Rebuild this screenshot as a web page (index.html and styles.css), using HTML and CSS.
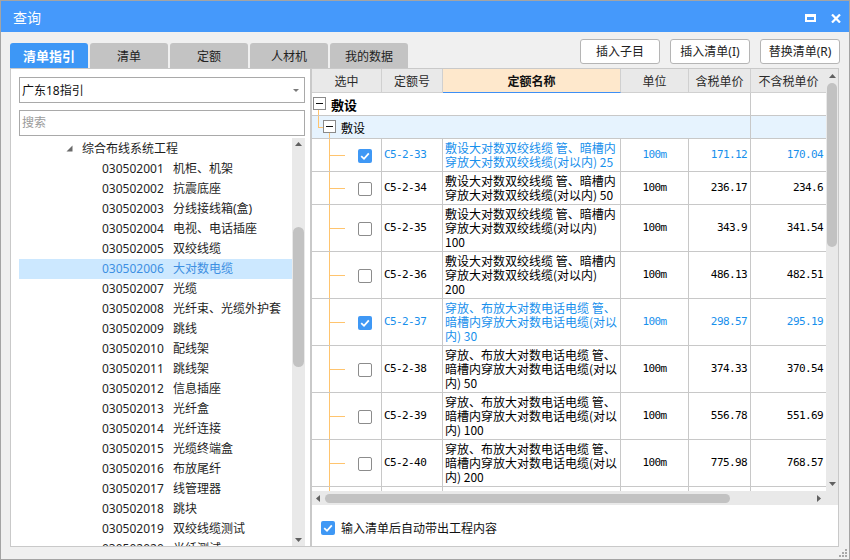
FILE: index.html
```html
<!DOCTYPE html>
<html lang="zh-CN">
<head>
<meta charset="utf-8">
<title>查询</title>
<link rel="stylesheet" href="styles.css">
</head>
<body>
<div class="window">
  <header class="titlebar">
    <span class="title">查询</span>
    <div class="win-ctrls">
      <svg class="ic-max" width="11" height="8" viewBox="0 0 11 8"><path d="M0 0h11v8H0z M2 3h7v3H2z" fill="#fff" fill-rule="evenodd"/></svg>
      <svg class="ic-close" width="10" height="9" viewBox="0 0 10 9"><path d="M1 0.5L9 8.5M9 0.5L1 8.5" stroke="#fff" stroke-width="2.2"/></svg>
    </div>
  </header>

  <div class="toolbar">
    <nav class="tabs">
      <span class="tab active">清单指引</span>
      <span class="tab">清单</span>
      <span class="tab">定额</span>
      <span class="tab">人材机</span>
      <span class="tab">我的数据</span>
    </nav>
    <div class="actions">
      <button class="btn">插入子目</button>
      <button class="btn">插入清单(I)</button>
      <button class="btn">替换清单(R)</button>
    </div>
  </div>

  <div class="panels">
    <section class="left-panel">
      <div class="select">
        <span>广东18指引</span>
        <svg width="6" height="3" viewBox="0 0 6 3"><path d="M0 0h6L3 3z" fill="#7a7a7a"/></svg>
      </div>
      <div class="search">搜索</div>
      <div class="tree-area">
        <ul class="tree">
          <li class="root"><svg class="tri" width="7" height="7" viewBox="0 0 7 7"><path d="M6.5 0.5V6.5H0.5z" fill="#6a6a6a"/></svg><span>综合布线系统工程</span></li>
          <li class="leaf"><span class="code">030502001</span><span>机柜、机架</span></li>
          <li class="leaf"><span class="code">030502002</span><span>抗震底座</span></li>
          <li class="leaf"><span class="code">030502003</span><span>分线接线箱(盒)</span></li>
          <li class="leaf"><span class="code">030502004</span><span>电视、电话插座</span></li>
          <li class="leaf"><span class="code">030502005</span><span>双绞线缆</span></li>
          <li class="leaf on"><span class="code">030502006</span><span>大对数电缆</span></li>
          <li class="leaf"><span class="code">030502007</span><span>光缆</span></li>
          <li class="leaf"><span class="code">030502008</span><span>光纤束、光缆外护套</span></li>
          <li class="leaf"><span class="code">030502009</span><span>跳线</span></li>
          <li class="leaf"><span class="code">030502010</span><span>配线架</span></li>
          <li class="leaf"><span class="code">030502011</span><span>跳线架</span></li>
          <li class="leaf"><span class="code">030502012</span><span>信息插座</span></li>
          <li class="leaf"><span class="code">030502013</span><span>光纤盒</span></li>
          <li class="leaf"><span class="code">030502014</span><span>光纤连接</span></li>
          <li class="leaf"><span class="code">030502015</span><span>光缆终端盒</span></li>
          <li class="leaf"><span class="code">030502016</span><span>布放尾纤</span></li>
          <li class="leaf"><span class="code">030502017</span><span>线管理器</span></li>
          <li class="leaf"><span class="code">030502018</span><span>跳块</span></li>
          <li class="leaf"><span class="code">030502019</span><span>双绞线缆测试</span></li>
          <li class="leaf"><span class="code">030502020</span><span>光纤测试</span></li>
        </ul>
        <div class="vscroll tree-scroll">
          <span class="arrow up"><svg width="7" height="4" viewBox="0 0 7 4"><path d="M0 4L3.5 0L7 4z" fill="#606060"/></svg></span>
          <span class="thumb"></span>
          <span class="arrow down"><svg width="7" height="4" viewBox="0 0 7 4"><path d="M0 0L3.5 4L7 0z" fill="#606060"/></svg></span>
        </div>
      </div>
    </section>

    <section class="right-panel">
      <div class="grid-area">
        <div class="grid-clip">
          <table class="grid">
            <colgroup>
              <col class="c-sel"><col class="c-code"><col class="c-name"><col class="c-unit"><col class="c-tax"><col class="c-notax">
            </colgroup>
            <thead>
              <tr>
                <th>选中</th><th>定额号</th><th class="sorted">定额名称</th><th>单位</th><th>含税单价</th><th class="last">不含税单价</th>
              </tr>
            </thead>
            <tbody>
              <tr class="grp">
                <td colspan="5" class="grp-cell"><span class="box"></span><b class="grp-text">敷设</b></td>
                <td class="last"></td>
              </tr>
              <tr class="sub">
                <td colspan="5" class="sub-cell"><span class="box"></span><span class="sub-text">敷设</span></td>
                <td class="last"></td>
              </tr>
              <tr class="row on">
                <td class="sel"><span class="cb checked"><svg width="14" height="14" viewBox="0 0 14 14"><path d="M3.2 7.2L6 9.8L10.8 4.4" fill="none" stroke="#fff" stroke-width="1.8"/></svg></span></td>
                <td class="code">C5-2-33</td>
                <td class="name">敷设大对数双绞线缆 管、暗槽内<br>穿放大对数双绞线缆(对以内) 25</td>
                <td class="unit">100m</td>
                <td class="num">171.12</td>
                <td class="num last">170.04</td>
              </tr>
              <tr class="row">
                <td class="sel"><span class="cb"></span></td>
                <td class="code">C5-2-34</td>
                <td class="name">敷设大对数双绞线缆 管、暗槽内<br>穿放大对数双绞线缆(对以内) 50</td>
                <td class="unit">100m</td>
                <td class="num">236.17</td>
                <td class="num last">234.6</td>
              </tr>
              <tr class="row">
                <td class="sel"><span class="cb"></span></td>
                <td class="code">C5-2-35</td>
                <td class="name">敷设大对数双绞线缆 管、暗槽内<br>穿放大对数双绞线缆(对以内)<br>100</td>
                <td class="unit">100m</td>
                <td class="num">343.9</td>
                <td class="num last">341.54</td>
              </tr>
              <tr class="row">
                <td class="sel"><span class="cb"></span></td>
                <td class="code">C5-2-36</td>
                <td class="name">敷设大对数双绞线缆 管、暗槽内<br>穿放大对数双绞线缆(对以内)<br>200</td>
                <td class="unit">100m</td>
                <td class="num">486.13</td>
                <td class="num last">482.51</td>
              </tr>
              <tr class="row on">
                <td class="sel"><span class="cb checked"><svg width="14" height="14" viewBox="0 0 14 14"><path d="M3.2 7.2L6 9.8L10.8 4.4" fill="none" stroke="#fff" stroke-width="1.8"/></svg></span></td>
                <td class="code">C5-2-37</td>
                <td class="name">穿放、布放大对数电话电缆 管、<br>暗槽内穿放大对数电话电缆(对以<br>内) 30</td>
                <td class="unit">100m</td>
                <td class="num">298.57</td>
                <td class="num last">295.19</td>
              </tr>
              <tr class="row">
                <td class="sel"><span class="cb"></span></td>
                <td class="code">C5-2-38</td>
                <td class="name">穿放、布放大对数电话电缆 管、<br>暗槽内穿放大对数电话电缆(对以<br>内) 50</td>
                <td class="unit">100m</td>
                <td class="num">374.33</td>
                <td class="num last">370.54</td>
              </tr>
              <tr class="row">
                <td class="sel"><span class="cb"></span></td>
                <td class="code">C5-2-39</td>
                <td class="name">穿放、布放大对数电话电缆 管、<br>暗槽内穿放大对数电话电缆(对以<br>内) 100</td>
                <td class="unit">100m</td>
                <td class="num">556.78</td>
                <td class="num last">551.69</td>
              </tr>
              <tr class="row">
                <td class="sel"><span class="cb"></span></td>
                <td class="code">C5-2-40</td>
                <td class="name">穿放、布放大对数电话电缆 管、<br>暗槽内穿放大对数电话电缆(对以<br>内) 200</td>
                <td class="unit">100m</td>
                <td class="num">775.98</td>
                <td class="num last">768.57</td>
              </tr>
              <tr class="row">
                <td class="sel"><span class="cb"></span></td>
                <td class="code"></td>
                <td class="name">&nbsp;<br>&nbsp;<br>&nbsp;</td>
                <td class="unit"></td>
                <td class="num"></td>
                <td class="num last"></td>
              </tr>
            </tbody>
          </table>
        </div>
        <div class="vscroll grid-vscroll">
          <span class="arrow up"><svg width="7" height="4" viewBox="0 0 7 4"><path d="M0 4L3.5 0L7 4z" fill="#606060"/></svg></span>
          <span class="thumb"></span>
          <span class="arrow down"><svg width="7" height="4" viewBox="0 0 7 4"><path d="M0 0L3.5 4L7 0z" fill="#606060"/></svg></span>
        </div>
      </div>
      <div class="hscroll-row">
        <div class="hscroll">
          <span class="harrow left"><svg width="4" height="7" viewBox="0 0 4 7"><path d="M4 0L0 3.5L4 7z" fill="#606060"/></svg></span>
          <span class="hthumb"></span>
          <span class="harrow right"><svg width="4" height="7" viewBox="0 0 4 7"><path d="M0 0L4 3.5L0 7z" fill="#606060"/></svg></span>
        </div>
        <div class="corner"></div>
      </div>
      <div class="footer">
        <label class="opt"><span class="cb checked"><svg width="14" height="14" viewBox="0 0 14 14"><path d="M3.2 7.2L6 9.8L10.8 4.4" fill="none" stroke="#fff" stroke-width="1.8"/></svg></span>输入清单后自动带出工程内容</label>
      </div>
    </section>
  </div>

  <div class="statusbar">
    <svg class="grip" width="9" height="9" viewBox="0 0 9 9" fill="#a8a8a8">
      <rect x="6" y="0" width="2" height="2"/>
      <rect x="3" y="3" width="2" height="2"/><rect x="6" y="3" width="2" height="2"/>
      <rect x="0" y="6" width="2" height="2"/><rect x="3" y="6" width="2" height="2"/><rect x="6" y="6" width="2" height="2"/>
    </svg>
  </div>
</div>
</body>
</html>
```

FILE: styles.css
```css
* { box-sizing: border-box; }
html, body { margin: 0; padding: 0; }
body {
  width: 850px;
  height: 560px;
  overflow: hidden;
  font-family: "Noto Sans", "Noto Sans CJK SC", sans-serif;
  font-size: 12px;
  color: #222;
  background: #f0f0f0;
}

.window {
  width: 850px;
  height: 560px;
  border: 1px solid #a4a4a4;
  background: #f0f0f0;
  display: flex;
  flex-direction: column;
}

/* title bar */
.titlebar {
  height: 31px;
  flex: none;
  background: #4599fb;
  display: flex;
  align-items: center;
  justify-content: space-between;
  padding: 1px 8px 0 12px;
  color: #fff;
}
.title {
  font-family: "Noto Sans CJK SC", sans-serif;
  font-size: 14px;
  line-height: 16px;
}
.win-ctrls {
  display: flex;
  align-items: center;
  gap: 15px;
  padding-top: 2px;
}
.ic-close { margin-top: 1px; }

/* toolbar */
.toolbar {
  height: 36px;
  flex: none;
  display: flex;
  justify-content: space-between;
  padding: 0 9px;
}
.tabs {
  align-self: flex-end;
  display: flex;
  gap: 2px;
}
.tab {
  width: 78px;
  height: 25px;
  line-height: 25px;
  text-align: center;
  background: #c3c3c3;
  border-radius: 3px 3px 0 0;
  color: #222;
  font-family: "Noto Sans CJK SC", sans-serif;
  font-size: 12px;
}
.tab.active {
  background: #3d97f6;
  color: #fff;
  font-weight: bold;
  font-size: 13px;
}
.actions {
  display: flex;
  gap: 10px;
  margin-top: 7px;
  align-self: flex-start;
}
.btn {
  width: 80px;
  height: 25px;
  padding: 0;
  border: 1px solid #b5b5b5;
  border-radius: 3px;
  background: #fff;
  font-family: "Noto Sans", "Noto Sans CJK SC", sans-serif;
  font-size: 12px;
  color: #222;
  line-height: 22px;
}

/* panels */
.panels {
  height: 479px;
  flex: none;
  display: flex;
  padding: 0 10px 0 9px;
}

.left-panel {
  width: 301px;
  border: 1px solid #c9c9c9;
  background: #fff;
  padding: 8px 5px 0 8px;
  display: flex;
  flex-direction: column;
}
.select {
  height: 26px;
  flex: none;
  border: 1px solid #a9a9a9;
  display: flex;
  align-items: center;
  justify-content: space-between;
  padding: 0 5px 0 2px;
  color: #111;
}
.search {
  margin-top: 7px;
  height: 26px;
  flex: none;
  border: 1px solid #a9a9a9;
  padding: 0 2px;
  line-height: 24px;
  color: #9b9b9b;
}
.tree-area {
  margin-top: 2px;
  flex: 1;
  min-height: 0;
  display: flex;
}
.tree {
  flex: 1;
  list-style: none;
  margin: 0;
  padding: 1px 0 0;
  overflow: hidden;
}
.tree li {
  height: 20px;
  line-height: 20px;
  display: flex;
  align-items: center;
  white-space: nowrap;
  color: #1e1e1e;
}
.tree .root { padding-left: 47px; }
.tree .tri { margin-right: 9px; margin-top: -1px; }
.tree .leaf { padding-left: 83px; }
.tree .code { width: 71px; flex: none; }
.tree .on {
  background: #cce8ff;
  color: #3d8fe2;
}

/* vertical scrollbars */
.vscroll {
  flex: none;
  background: #e9e9e9;
  display: flex;
  flex-direction: column;
  align-items: center;
}
.vscroll .arrow {
  display: flex;
  align-items: center;
  justify-content: center;
  width: 100%;
  flex: none;
}
.vscroll .arrow.down { margin-top: auto; }
.vscroll .thumb {
  flex: none;
  background: #c2c2c2;
}
.tree-scroll { width: 13px; }
.tree-scroll .arrow { height: 12px; }
.tree-scroll .thumb {
  width: 11px;
  height: 140px;
  margin-top: 77px;
  border-radius: 5.5px;
}
.grid-vscroll { width: 12px; }
.grid-vscroll .arrow { height: 14px; }
.grid-vscroll .thumb {
  width: 10px;
  height: 164px;
  margin-top: 0;
  border-radius: 5px;
}

/* right panel */
.right-panel {
  width: 528px;
  border: 1px solid #c9c9c9;
  background: #fff;
  display: flex;
  flex-direction: column;
}
.grid-area {
  height: 422px;
  flex: none;
  display: flex;
}
.grid-clip {
  width: 514px;
  flex: none;
  overflow: hidden;
}

.grid {
  table-layout: fixed;
  border-collapse: separate;
  border-spacing: 0;
  width: 514px;
  font-family: "Noto Sans CJK SC", sans-serif;
  font-size: 12px;
  color: #000;
}
.c-sel { width: 70px; }
.c-code { width: 61px; }
.c-name { width: 178px; }
.c-unit { width: 68px; }
.c-tax { width: 62px; }
.c-notax { width: 75px; }

.grid th, .grid td {
  padding: 0;
  border-right: 1px solid #c8c8c8;
  border-bottom: 1px solid #c8c8c8;
  overflow: hidden;
  white-space: nowrap;
}
.grid th {
  height: 24px;
  line-height: 16px;
  background: #e9e9e9;
  font-weight: normal;
  color: #2a2a2a;
  border-right-color: #d0d0d0;
  border-bottom-color: #d0d0d0;
  text-align: center;
  vertical-align: middle;
}
.grid th.sorted {
  background: #fee8cc;
  font-weight: bold;
  color: #111;
  border-bottom-color: #3d8ff5;
}
.grid .last { border-right: none; }

.grp td, .sub td { height: 23px; line-height: 16px; vertical-align: middle; }
.grp-cell {
  padding-left: 1px !important;
  background: linear-gradient(#ffc46e, #ffc46e) 6px 100% / 1px 50% no-repeat;
}
.sub td { background-color: #e6f3fe; }
.sub-cell {
  padding-left: 11px !important;
  background:
    linear-gradient(#ffc46e, #ffc46e) 6px 0 / 1px 50% no-repeat,
    linear-gradient(#ffc46e, #ffc46e) 6px 50% / 5px 1px no-repeat,
    linear-gradient(#ffc46e, #ffc46e) 17px 100% / 1px 50% no-repeat,
    #e6f3fe;
}
.box {
  display: inline-block;
  width: 13px;
  height: 13px;
  border: 1px solid #8a8a8a;
  background: #fff linear-gradient(#111, #111) center / 7px 1px no-repeat;
  vertical-align: middle;
  margin-top: -2px;
}
.grp-text {
  font-size: 13px;
  margin-left: 5px;
  vertical-align: middle;
}
.sub-text {
  margin-left: 5px;
  vertical-align: middle;
}

.row td {
  padding: 2px 2px;
  line-height: 14px;
  vertical-align: middle;
}
.row td.sel {
  padding: 0 0 0 46px;
  background:
    linear-gradient(#ffc46e, #ffc46e) 17px 0 / 1px 100% no-repeat,
    linear-gradient(#ffc46e, #ffc46e) 18px 50% / 15px 1px no-repeat;
}
.row .code,
.row .unit,
.row .num {
  font-family: "DejaVu Sans Mono", "Liberation Mono", monospace;
  font-size: 11px;
  letter-spacing: -0.6px;
}
.row .unit { text-align: center; }
.row .num { text-align: right; padding-right: 3px; }
.row.on td { color: #1890ec; }

.cb {
  display: inline-block;
  width: 14px;
  height: 14px;
  border: 1px solid #8c8c8c;
  border-radius: 2px;
  background: #fff;
  vertical-align: middle;
}
.cb.checked {
  border: none;
  background: #3f98f5;
}
.cb svg { display: block; }

/* horizontal scrollbar */
.hscroll-row {
  height: 14px;
  flex: none;
  display: flex;
}
.hscroll {
  width: 514px;
  flex: none;
  background: #e9e9e9;
  display: flex;
  align-items: center;
}
.harrow {
  width: 12px;
  height: 14px;
  display: flex;
  align-items: center;
  justify-content: center;
  flex: none;
}
.harrow.right { margin-left: auto; width: 14px; }
.hthumb {
  width: 405px;
  height: 9px;
  margin-left: 1px;
  border-radius: 4.5px;
  background: #c2c2c2;
}
.corner {
  flex: 1;
  background: #e9e9e9;
}

.footer {
  flex: 1;
  padding: 16px 0 0 9px;
}
.opt {
  display: flex;
  align-items: center;
  gap: 6px;
  font-family: "Noto Sans CJK SC", sans-serif;
  font-size: 12px;
  line-height: 14px;
  color: #111;
}

/* bottom strip */
.statusbar {
  flex: 1;
  display: flex;
  justify-content: flex-end;
  align-items: flex-end;
  padding: 0 1px 1px 0;
}
```
